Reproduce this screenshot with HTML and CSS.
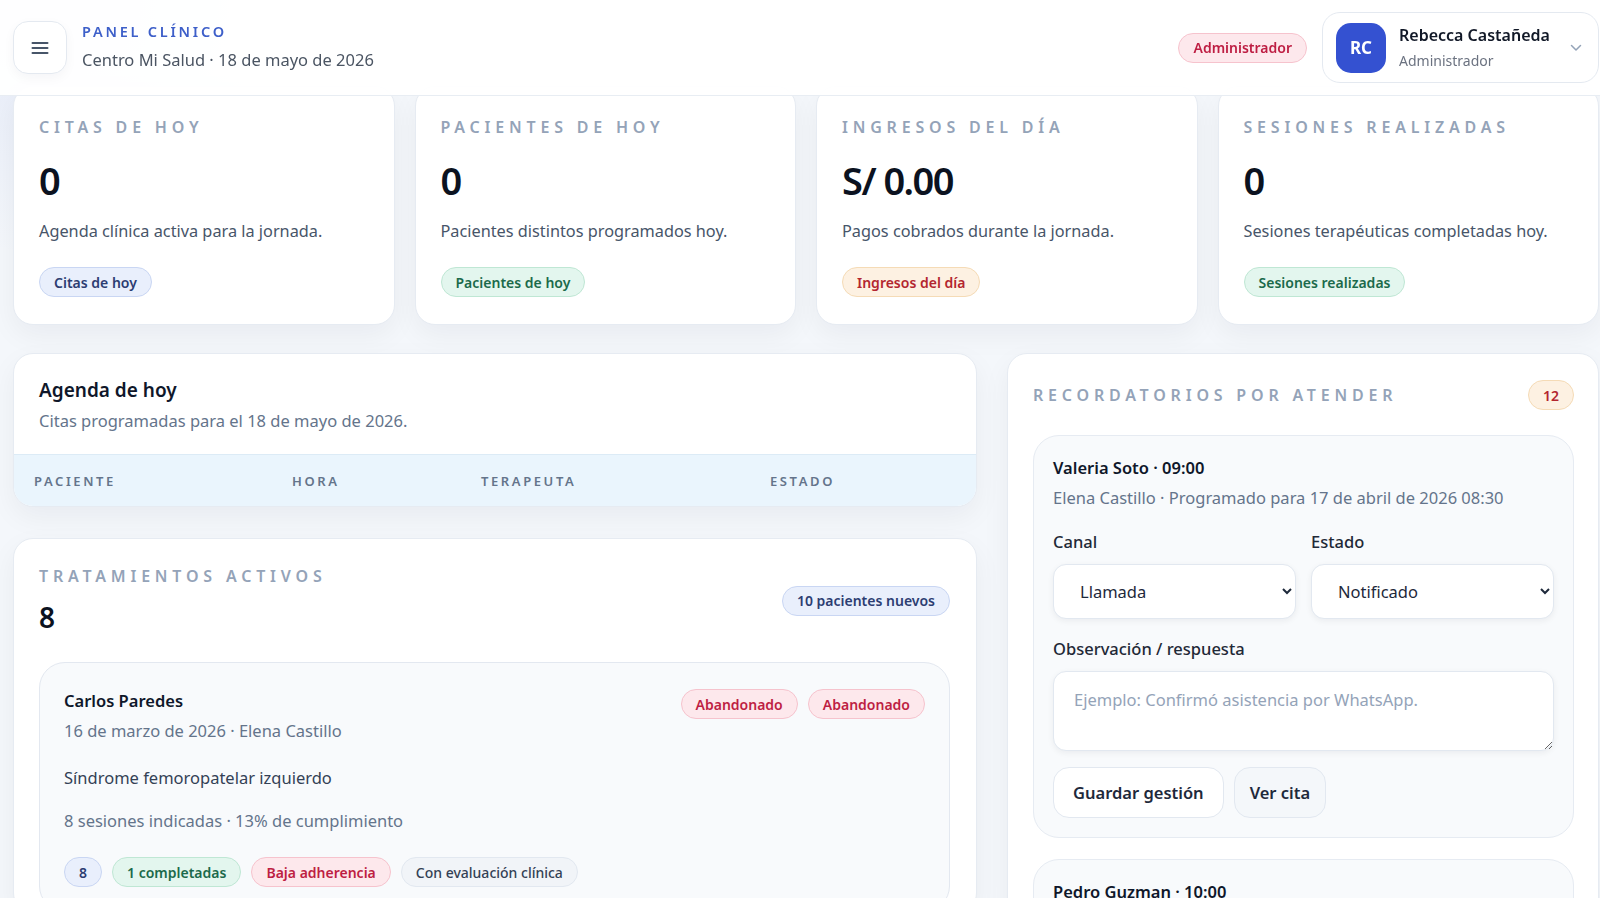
FILE: index.html
```html
<!DOCTYPE html>
<html lang="es">
<head>
  <meta charset="UTF-8">
  <meta name="viewport" content="width=device-width, initial-scale=1.0">
  <title>Panel clínico</title>
  <link rel="stylesheet" href="styles.css">
</head>
<body>

<header class="topbar">
  <div class="brand">
    <button class="menu-btn" type="button" aria-label="Menú">
      <svg width="18" height="14" viewBox="0 0 18 14" fill="none" stroke="#475569" stroke-width="2" stroke-linecap="round">
        <line x1="1.5" y1="2" x2="16.5" y2="2"/>
        <line x1="1.5" y1="7" x2="16.5" y2="7"/>
        <line x1="1.5" y1="12" x2="16.5" y2="12"/>
      </svg>
    </button>
    <div class="brand-text">
      <p class="kicker">Panel clínico</p>
      <p class="place">Centro Mi Salud · 18 de mayo de 2026</p>
    </div>
  </div>

  <div class="topbar-right">
    <span class="pill pill-rose">Administrador</span>
    <div class="user-card">
      <div class="avatar">RC</div>
      <div class="user-info">
        <p class="user-name">Rebecca Castañeda</p>
        <p class="user-role">Administrador</p>
      </div>
      <svg class="chevron" width="12" height="8" viewBox="0 0 12 8" fill="none" stroke="#94a3b8" stroke-width="1.5" stroke-linecap="round" stroke-linejoin="round">
        <path d="M1.5 1.5 6 6l4.5-4.5"/>
      </svg>
    </div>
  </div>
</header>

<main class="page">

  <section class="stats">
    <article class="card stat-card">
      <p class="eyebrow">Citas de hoy</p>
      <p class="stat-value">0</p>
      <p class="stat-desc">Agenda clínica activa para la jornada.</p>
      <span class="pill pill-blue">Citas de hoy</span>
    </article>
    <article class="card stat-card">
      <p class="eyebrow">Pacientes de hoy</p>
      <p class="stat-value">0</p>
      <p class="stat-desc">Pacientes distintos programados hoy.</p>
      <span class="pill pill-green">Pacientes de hoy</span>
    </article>
    <article class="card stat-card">
      <p class="eyebrow">Ingresos del día</p>
      <p class="stat-value">S/ 0.00</p>
      <p class="stat-desc">Pagos cobrados durante la jornada.</p>
      <span class="pill pill-peach">Ingresos del día</span>
    </article>
    <article class="card stat-card">
      <p class="eyebrow">Sesiones realizadas</p>
      <p class="stat-value">0</p>
      <p class="stat-desc">Sesiones terapéuticas completadas hoy.</p>
      <span class="pill pill-green">Sesiones realizadas</span>
    </article>
  </section>

  <section class="dashboard-grid">
    <div class="main-col">

      <article class="card agenda-card">
        <div class="agenda-head">
          <h2 class="card-title">Agenda de hoy</h2>
          <p class="muted">Citas programadas para el 18 de mayo de 2026.</p>
        </div>
        <table class="agenda-table">
          <thead>
            <tr>
              <th class="col-patient">Paciente</th>
              <th class="col-hour">Hora</th>
              <th class="col-therapist">Terapeuta</th>
              <th>Estado</th>
            </tr>
          </thead>
        </table>
      </article>

      <article class="card treatments-card">
        <div class="treatments-head">
          <div>
            <p class="eyebrow">Tratamientos activos</p>
            <p class="treatments-count">8</p>
          </div>
          <span class="pill pill-blue">10 pacientes nuevos</span>
        </div>

        <div class="treatment">
          <div class="treatment-top">
            <div>
              <p class="item-name">Carlos Paredes</p>
              <p class="muted item-sub">16 de marzo de 2026 · Elena Castillo</p>
            </div>
            <div class="pill-row">
              <span class="pill pill-rose">Abandonado</span>
              <span class="pill pill-rose">Abandonado</span>
            </div>
          </div>
          <p class="diagnosis">Síndrome femoropatelar izquierdo</p>
          <p class="muted sessions">8 sesiones indicadas · 13% de cumplimiento</p>
          <div class="pill-row">
            <span class="pill pill-blue">8</span>
            <span class="pill pill-green">1 completadas</span>
            <span class="pill pill-rose">Baja adherencia</span>
            <span class="pill pill-gray">Con evaluación clínica</span>
          </div>
        </div>
      </article>

    </div>

    <aside class="card reminders-card">
      <div class="reminders-head">
        <p class="eyebrow">Recordatorios por atender</p>
        <span class="pill pill-peach">12</span>
      </div>

      <div class="reminder">
        <p class="item-name">Valeria Soto · 09:00</p>
        <p class="muted item-sub">Elena Castillo · Programado para 17 de abril de 2026 08:30</p>
        <div class="field-row">
          <div class="field">
            <label for="canal1">Canal</label>
            <select id="canal1">
              <option>Llamada</option>
              <option>WhatsApp</option>
              <option>Correo</option>
            </select>
          </div>
          <div class="field">
            <label for="estado1">Estado</label>
            <select id="estado1">
              <option>Notificado</option>
              <option>Pendiente</option>
              <option>Confirmado</option>
            </select>
          </div>
        </div>
        <div class="field">
          <label for="obs1">Observación / respuesta</label>
          <textarea id="obs1" placeholder="Ejemplo: Confirmó asistencia por WhatsApp."></textarea>
        </div>
        <div class="actions">
          <button class="btn" type="button">Guardar gestión</button>
          <button class="btn btn-soft" type="button">Ver cita</button>
        </div>
      </div>

      <div class="reminder">
        <p class="item-name">Pedro Guzman · 10:00</p>
        <p class="muted item-sub">Elena Castillo · Programado para 17 de abril de 2026 09:30</p>
      </div>
    </aside>
  </section>

</main>

</body>
</html>
```

FILE: styles.css
```css
body {
  margin: 0;
  font-family: "Noto Sans", "Segoe UI", sans-serif;
  background-color: #f4f7fb;
  background-image: radial-gradient(circle at 4% 0, rgba(79, 109, 220, 0.10), transparent 260px);
  color: #0f172a;
}

p {
  margin: 0;
}

/* header */

.topbar {
  position: fixed;
  top: 0;
  left: 0;
  right: 0;
  height: 96px;
  box-sizing: border-box;
  padding: 0 1px 0 13px;
  display: flex;
  align-items: center;
  justify-content: space-between;
  background: rgba(255, 255, 255, 0.95);
  border-bottom: 1px solid #e8edf3;
  z-index: 10;
}

.brand {
  display: flex;
  align-items: center;
  gap: 15px;
}

.menu-btn {
  width: 54px;
  height: 53px;
  display: flex;
  align-items: center;
  justify-content: center;
  background: #fff;
  border: 1px solid #e4e9f0;
  border-radius: 15px;
  box-shadow: 0 4px 12px rgba(15, 23, 42, 0.04);
  cursor: pointer;
}

.brand-text {
  margin-bottom: 3px;
}

.kicker {
  font-size: 14.5px;
  line-height: 20px;
  font-weight: 600;
  letter-spacing: 0.19em;
  text-transform: uppercase;
  color: #3d5fc9;
}

.place {
  margin-top: 7px;
  font-size: 16.5px;
  line-height: 24px;
  color: #4b5563;
}

.topbar-right {
  display: flex;
  align-items: center;
  gap: 15px;
}

.user-card {
  width: 277px;
  height: 71px;
  box-sizing: border-box;
  display: flex;
  align-items: center;
  gap: 13px;
  padding: 0 16px 0 13px;
  background: #fff;
  border: 1px solid #e4e9f0;
  border-radius: 18px;
}

.avatar {
  flex: none;
  width: 50px;
  height: 50px;
  border-radius: 15px;
  background: #3451d1;
  color: #fff;
  font-size: 17px;
  font-weight: 700;
  display: flex;
  align-items: center;
  justify-content: center;
}

.user-info {
  white-space: nowrap;
}

.user-name {
  font-size: 16px;
  line-height: 22px;
  font-weight: 600;
  color: #111827;
}

.user-role {
  margin-top: 5px;
  font-size: 14px;
  line-height: 20px;
  color: #6b7280;
}

.chevron {
  flex: none;
  margin-left: auto;
}

/* layout */

.page {
  padding: 86px 1px 40px 13px;
}

.card {
  background: #fff;
  border: 1px solid #e6ebf2;
  border-radius: 20px;
  box-shadow: 0 10px 28px rgba(15, 23, 42, 0.05);
}

.stats {
  display: grid;
  grid-template-columns: repeat(4, minmax(0, 1fr));
  gap: 20px;
}

.dashboard-grid {
  margin-top: 28px;
  display: grid;
  grid-template-columns: minmax(0, 1fr) 592px;
  gap: 30px;
  align-items: start;
}

.main-col {
  display: flex;
  flex-direction: column;
  gap: 31px;
}

/* shared text */

.eyebrow {
  font-size: 16px;
  line-height: 20px;
  font-weight: 600;
  letter-spacing: 0.3em;
  text-transform: uppercase;
  color: #94a3b8;
}

.muted {
  color: #64748b;
  font-size: 16.5px;
  line-height: 24px;
}

.pill {
  display: inline-flex;
  align-items: center;
  height: 30px;
  box-sizing: border-box;
  padding: 0 14px;
  border: 1px solid;
  border-radius: 999px;
  font-size: 14px;
  font-weight: 600;
  white-space: nowrap;
}

.pill-blue {
  background: #e9effc;
  border-color: #c9d6f3;
  color: #2c3d72;
}

.pill-green {
  background: #e3f6ee;
  border-color: #bfe7d4;
  color: #1b6a4b;
}

.pill-peach {
  background: #fdf1e2;
  border-color: #f5dbb6;
  color: #b3262f;
}

.pill-rose {
  background: #fde8ec;
  border-color: #f6c3cd;
  color: #be1e43;
}

.pill-gray {
  background: #f1f4f8;
  border-color: #e2e8f0;
  color: #334155;
  font-weight: 500;
}

.pill-row {
  display: flex;
  gap: 10px;
}

/* stat cards */

.stat-card {
  display: flex;
  flex-direction: column;
  align-items: flex-start;
  padding: 30px 25px 27px;
}

.stat-value {
  margin-top: 21px;
  font-size: 38px;
  line-height: 44px;
  font-weight: 600;
  letter-spacing: -0.04em;
  color: #0b1220;
}

.stat-desc {
  margin-top: 17px;
  font-size: 16.3px;
  line-height: 24px;
  color: #475569;
}

.stat-card .pill {
  margin-top: 24px;
}

/* agenda */

.agenda-card {
  overflow: hidden;
}

.agenda-head {
  padding: 23px 25px 21px;
}

.card-title {
  margin: 0 0 6px;
  font-size: 19px;
  line-height: 26px;
  font-weight: 600;
  color: #0f172a;
}

.agenda-table {
  width: 100%;
  border-collapse: collapse;
  table-layout: fixed;
}

.agenda-table th {
  height: 51px;
  padding: 0 0 0 20px;
  text-align: left;
  font-size: 13px;
  font-weight: 600;
  letter-spacing: 0.2em;
  text-transform: uppercase;
  color: #64748b;
  background: #eaf5fd;
  border-top: 1px solid #dcebf6;
}

.col-patient {
  width: 238px;
}

.col-hour {
  width: 169px;
}

.col-therapist {
  width: 269px;
}

/* treatments */

.treatments-card {
  padding: 27px 26px 0 25px;
}

.treatments-head {
  display: flex;
  align-items: center;
  justify-content: space-between;
}

.treatments-count {
  margin-top: 13px;
  font-size: 28px;
  line-height: 36px;
  font-weight: 600;
  color: #0b1220;
}

.treatment {
  margin-top: 27px;
  padding: 26px 24px 24px;
  background: #f8fafc;
  border: 1px solid #e3e8f0;
  border-radius: 26px;
}

.treatment-top {
  display: flex;
  justify-content: space-between;
  align-items: flex-start;
}

.item-name {
  font-size: 16.5px;
  line-height: 24px;
  font-weight: 600;
  color: #0f172a;
}

.item-sub {
  margin-top: 6px;
}

.diagnosis {
  margin-top: 23px;
  font-size: 16.5px;
  line-height: 24px;
  color: #334155;
}

.sessions {
  margin-top: 19px;
  margin-bottom: 24px;
}

/* reminders */

.reminders-card {
  padding: 26px 24px 24px 25px;
}

.reminders-head {
  display: flex;
  align-items: center;
  justify-content: space-between;
  margin-bottom: 25px;
}

.reminder {
  padding: 20px 19px 19px;
  background: #f8fafc;
  border: 1px solid #e6ebf2;
  border-radius: 26px;
}

.reminder + .reminder {
  margin-top: 21px;
}

.field-row {
  display: grid;
  grid-template-columns: 1fr 1fr;
  gap: 15px;
  margin-top: 20px;
}

.field {
  display: flex;
  flex-direction: column;
}

.reminder > .field {
  margin-top: 18px;
}

.field label {
  margin-bottom: 10px;
  font-size: 16.5px;
  line-height: 24px;
  font-weight: 500;
  color: #1f2937;
}

select,
textarea {
  font-family: inherit;
  font-size: 16.5px;
  color: #1e293b;
  background: #fff;
  border: 1px solid #e2e8f0;
  border-radius: 13px;
  box-shadow: 0 2px 6px rgba(15, 23, 42, 0.06);
  box-sizing: border-box;
}

select {
  height: 55px;
  padding: 0 14px 0 22px;
}

textarea {
  height: 80px;
  padding: 16px 20px;
  line-height: 24px;
  resize: vertical;
}

textarea::placeholder {
  color: #94a3b8;
}

.actions {
  display: flex;
  gap: 10px;
  margin-top: 16px;
}

.btn {
  height: 51px;
  padding: 0 19px;
  font-family: inherit;
  font-size: 16.5px;
  font-weight: 600;
  color: #1e293b;
  background: #fff;
  border: 1px solid #e2e8f0;
  border-radius: 16px;
  cursor: pointer;
}

.btn-soft {
  padding: 0 15px;
  background: #f4f7fa;
}
```
